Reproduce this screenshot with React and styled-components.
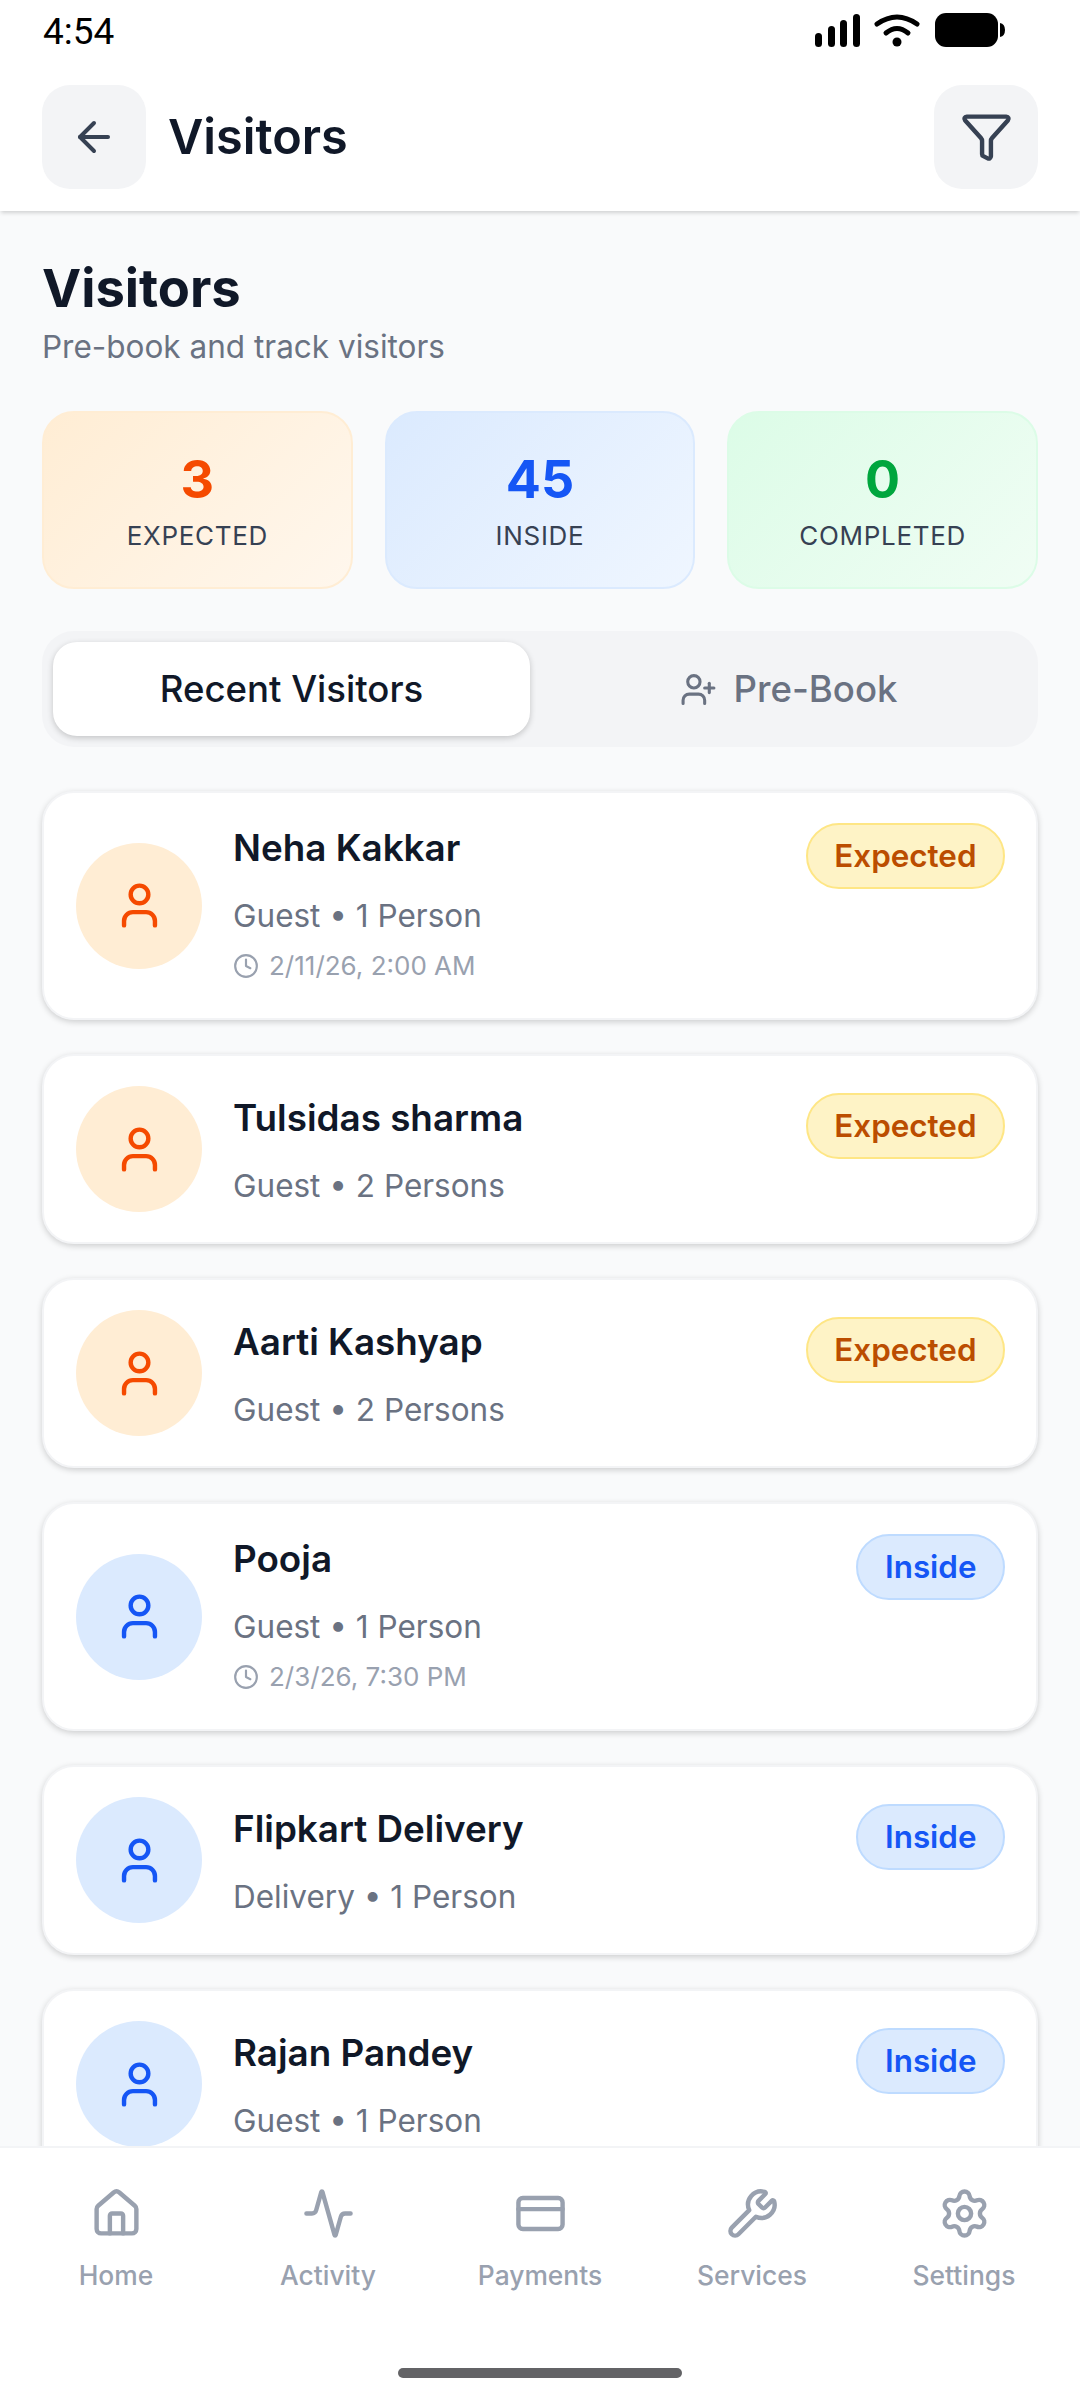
import styled, { createGlobalStyle } from "styled-components";
import {
  Activity,
  ArrowLeft,
  Clock,
  CreditCard,
  Funnel,
  House,
  Settings,
  User,
  UserPlus,
  Wrench,
} from "lucide-react";

const GlobalStyle = createGlobalStyle`
  * { box-sizing: border-box; }
  html, body { margin: 0; padding: 0; background: #fff; }
  body { font-family: Inter, "Liberation Sans", sans-serif; }
`;

const Screen = styled.div`
  width: 1080px;
  height: 2400px;
  display: flex;
  flex-direction: column;
  overflow: hidden;
  background: #f9fafb;
`;

const StatusBar = styled.div`
  height: 62px;
  flex: none;
  background: #fff;
  display: flex;
  align-items: center;
  justify-content: space-between;
  padding: 0 75px 0 43px;
  font-family: Roboto, sans-serif;
  font-size: 37px;
  color: #000;
`;

const Header = styled.header`
  height: 149px;
  flex: none;
  background: #fff;
  display: flex;
  align-items: center;
  justify-content: space-between;
  padding: 0 42px;
  box-shadow: 0 3px 4px -1px rgba(0, 0, 0, 0.16);
  position: relative;
  z-index: 1;
`;

const HeaderLeft = styled.div`
  display: flex;
  align-items: center;
  gap: 22px;
`;

const IconButton = styled.button`
  width: 104px;
  height: 104px;
  border: none;
  border-radius: 28px;
  background: #f3f4f6;
  color: #364153;
  display: flex;
  align-items: center;
  justify-content: center;
  padding: 0;
`;

const HeaderTitle = styled.h1`
  margin: 0;
  font-size: 48.6px;
  font-weight: 600;
  color: #101828;
`;

const Content = styled.main`
  flex: 1;
  min-height: 0;
  overflow: hidden;
  padding: 45px 42px 0;
`;

const PageTitle = styled.h2`
  margin: 0;
  font-size: 52.5px;
  line-height: 64px;
  font-weight: 700;
  color: #101828;
`;

const Subtitle = styled.p`
  margin: 5px 0 0;
  font-size: 31.5px;
  line-height: 44px;
  color: #6a7282;
`;

const StatsRow = styled.div`
  display: grid;
  grid-template-columns: repeat(3, 1fr);
  gap: 32px;
  margin-top: 42px;
`;

const StatCard = styled.div`
  height: 178px;
  border-radius: 32px;
  border: 2px solid ${(p) => p.$border};
  background: linear-gradient(135deg, ${(p) => p.$from}, ${(p) => p.$to});
  display: flex;
  flex-direction: column;
  align-items: center;
  padding-top: 36px;
`;

const StatValue = styled.div`
  font-size: 52px;
  line-height: 62px;
  font-weight: 700;
  color: ${(p) => p.$color};
`;

const StatLabel = styled.div`
  margin-top: 8px;
  font-size: 26px;
  line-height: 34px;
  letter-spacing: 0.7px;
  color: #364153;
`;

const Tabs = styled.div`
  margin-top: 42px;
  height: 116px;
  border-radius: 32px;
  background: #f3f4f6;
  padding: 11px;
  display: grid;
  grid-template-columns: 1fr 1fr;
  gap: 20px;
`;

const Tab = styled.div`
  border-radius: 24px;
  display: flex;
  align-items: center;
  justify-content: center;
  gap: 17px;
  font-size: 36.6px;
  font-weight: 500;
  color: ${(p) => (p.$active ? "#101828" : "#6a7282")};
  background: ${(p) => (p.$active ? "#fff" : "transparent")};
  box-shadow: ${(p) => (p.$active ? "0 2px 6px rgba(0, 0, 0, 0.2)" : "none")};
`;

const CardList = styled.div`
  margin-top: 44px;
  display: flex;
  flex-direction: column;
  gap: 34px;
`;

const Card = styled.article`
  background: #fff;
  border-radius: 32px;
  border: 2px solid #f3f4f6;
  box-shadow: 0 2px 6px rgba(0, 0, 0, 0.18);
  padding: 30px 31px 30px 32px;
  display: flex;
  align-items: center;
  gap: 31px;
`;

const Avatar = styled.div`
  flex: none;
  width: 126px;
  height: 126px;
  border-radius: 50%;
  background: ${(p) => p.$bg};
  color: ${(p) => p.$color};
  display: flex;
  align-items: center;
  justify-content: center;
`;

const CardBody = styled.div`
  flex: 1;
  min-width: 0;
  padding-top: ${(p) => (p.$hasTime ? "0" : "4px")};
`;

const TopRow = styled.div`
  display: flex;
  align-items: flex-start;
  justify-content: space-between;
`;

const Name = styled.div`
  font-size: 36.8px;
  line-height: 50px;
  font-weight: 600;
  color: #101828;
`;

const Meta = styled.div`
  margin-top: 4px;
  font-size: 31.5px;
  line-height: 46px;
  color: #6a7282;
`;

const TimeRow = styled.div`
  margin-top: 4px;
  display: flex;
  align-items: center;
  gap: 10px;
  font-size: 26px;
  line-height: 45px;
  color: #99a1af;
`;

const Badge = styled.span`
  flex: none;
  height: 66px;
  padding: 0 26.5px;
  border-radius: 33px;
  display: flex;
  align-items: center;
  font-size: 31.4px;
  font-weight: 600;
  color: ${(p) => p.$color};
  background: ${(p) => p.$bg};
  border: 2px solid ${(p) => p.$border};
`;

const BottomNav = styled.nav`
  flex: none;
  height: 254px;
  background: #fff;
  border-top: 2px solid #f3f4f6;
  position: relative;
  z-index: 1;
  display: flex;
  flex-direction: column;
`;

const NavItems = styled.div`
  display: grid;
  grid-template-columns: repeat(5, 1fr);
  padding: 39px 10px 0;
`;

const NavItem = styled.div`
  display: flex;
  flex-direction: column;
  align-items: center;
  gap: 17px;
  font-size: 26.4px;
  line-height: 36px;
  font-weight: 500;
  color: #99a1af;
`;

const HomeIndicator = styled.div`
  width: 284px;
  height: 10px;
  border-radius: 5px;
  background: #636366;
  margin: auto auto 22px;
`;

const StatusIcons = styled.svg`
  display: block;
`;

const blue = "#1556f5";

const tones = {
  expected: {
    avatar: "#ffedd4",
    icon: "#f54a00",
    badge: { $bg: "#fef3c6", $border: "#fee685", $color: "#bb4d00" },
  },
  inside: {
    avatar: "#dbeafe",
    icon: blue,
    badge: { $bg: "#dbeafe", $border: "#bedbff", $color: blue },
  },
};

const visitors = [
  { name: "Neha Kakkar", meta: "Guest • 1 Person", time: "2/11/26, 2:00 AM", status: "expected" },
  { name: "Tulsidas sharma", meta: "Guest • 2 Persons", status: "expected" },
  { name: "Aarti Kashyap", meta: "Guest • 2 Persons", status: "expected" },
  { name: "Pooja", meta: "Guest • 1 Person", time: "2/3/26, 7:30 PM", status: "inside" },
  { name: "Flipkart Delivery", meta: "Delivery • 1 Person", status: "inside" },
  { name: "Rajan Pandey", meta: "Guest • 1 Person", status: "inside" },
];

const navItems = [
  { label: "Home", Icon: House },
  { label: "Activity", Icon: Activity },
  { label: "Payments", Icon: CreditCard },
  { label: "Services", Icon: Wrench },
  { label: "Settings", Icon: Settings },
];

const App = () => {
  return (
    <Screen>
      <GlobalStyle />
      <StatusBar>
        <span>4:54</span>
        <StatusIcons width="190" height="36" viewBox="0 0 190 36">
          <rect x="0" y="20" width="7" height="14" rx="3.5" fill="#000" />
          <rect x="13" y="13" width="7" height="21" rx="3.5" fill="#000" />
          <rect x="25" y="7" width="7" height="27" rx="3.5" fill="#000" />
          <rect x="38" y="1" width="7" height="33" rx="3.5" fill="#000" />
          <path d="M62 11 Q82 -3 102 11" fill="none" stroke="#000" strokeWidth="5" strokeLinecap="round" />
          <path d="M71 20 Q82 11 93 20" fill="none" stroke="#000" strokeWidth="5" strokeLinecap="round" />
          <circle cx="82" cy="29" r="4.5" fill="#000" />
          <rect x="120" y="0" width="63" height="34" rx="11" fill="#000" />
          <path d="M185 10 Q190 11 190 17 Q190 23 185 24 Z" fill="#000" />
        </StatusIcons>
      </StatusBar>

      <Header>
        <HeaderLeft>
          <IconButton>
            <ArrowLeft size={48} strokeWidth={2} />
          </IconButton>
          <HeaderTitle>Visitors</HeaderTitle>
        </HeaderLeft>
        <IconButton>
          <Funnel size={53} strokeWidth={2} />
        </IconButton>
      </Header>

      <Content>
        <PageTitle>Visitors</PageTitle>
        <Subtitle>Pre-book and track visitors</Subtitle>

        <StatsRow>
          <StatCard $from="#ffedd4" $to="#fff7ed" $border="#ffedd4">
            <StatValue $color="#f54a00">3</StatValue>
            <StatLabel>EXPECTED</StatLabel>
          </StatCard>
          <StatCard $from="#dbeafe" $to="#eff6ff" $border="#dbeafe">
            <StatValue $color={blue}>45</StatValue>
            <StatLabel>INSIDE</StatLabel>
          </StatCard>
          <StatCard $from="#dcfce7" $to="#f0fdf4" $border="#dcfce7">
            <StatValue $color="#00a63e">0</StatValue>
            <StatLabel>COMPLETED</StatLabel>
          </StatCard>
        </StatsRow>

        <Tabs>
          <Tab $active>Recent Visitors</Tab>
          <Tab>
            <UserPlus size={37} strokeWidth={2} />
            Pre-Book
          </Tab>
        </Tabs>

        <CardList>
          {visitors.map((v) => {
            const tone = tones[v.status];
            return (
              <Card key={v.name}>
                <Avatar $bg={tone.avatar} $color={tone.icon}>
                  <User size={53} strokeWidth={2} />
                </Avatar>
                <CardBody $hasTime={Boolean(v.time)}>
                  <TopRow>
                    <Name>{v.name}</Name>
                    <Badge {...tone.badge}>
                      {v.status === "expected" ? "Expected" : "Inside"}
                    </Badge>
                  </TopRow>
                  <Meta>{v.meta}</Meta>
                  {v.time && (
                    <TimeRow>
                      <Clock size={26} strokeWidth={2} />
                      {v.time}
                    </TimeRow>
                  )}
                </CardBody>
              </Card>
            );
          })}
        </CardList>
      </Content>

      <BottomNav>
        <NavItems>
          {navItems.map(({ label, Icon }) => (
            <NavItem key={label}>
              <Icon size={53} strokeWidth={2} />
              {label}
            </NavItem>
          ))}
        </NavItems>
        <HomeIndicator />
      </BottomNav>
    </Screen>
  );
};

export default App;
